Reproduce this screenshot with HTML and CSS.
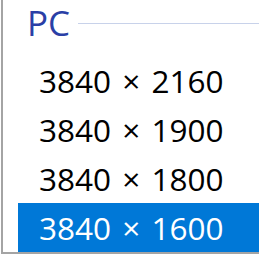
FILE: index.html
```html
<!DOCTYPE html>
<html lang="en">
<head>
    <meta charset="UTF-8">
    <title>PC</title>
    <link rel="stylesheet" href="styles.css">
</head>
<body>
<div class="panel">
    <div class="group-header">
        <span class="group-title">PC</span>
        <span class="group-line"></span>
    </div>
    <ul class="res-list">
        <li class="res-item">3840 × 2160</li>
        <li class="res-item">3840 × 1900</li>
        <li class="res-item">3840 × 1800</li>
        <li class="res-item selected">3840 × 1600</li>
    </ul>
</div>
</body>
</html>
```
FILE: styles.css
```css
body {
    font-family: "Open Sans", "Noto Sans", sans-serif;
    margin: 0;
    padding: 0;
    background-color: #fff;
}
.panel {
    margin-left: 1px;
    border-left: 2px solid #a4a4a4;
    border-bottom: 2px solid #a4a4a4;
}
.group-header {
    display: flex;
    align-items: flex-start;
    height: 56px;
    padding-left: 24px;
}
.group-title {
    font-size: 35px;
    line-height: 46px;
    color: #2a3fa6;
}
.group-line {
    flex: 1;
    height: 1px;
    margin-top: 23px;
    margin-left: 8px;
    background-color: #c8d2ea;
}
.res-list {
    list-style: none;
    margin: 0 0 0 15px;
    padding: 0;
}
.res-item {
    height: 49px;
    line-height: 49px;
    padding-left: 21px;
    font-size: 31.5px;
    word-spacing: 3px;
    color: #000;
}
.res-item.selected {
    background-color: #0078d7;
    color: #fff;
}
```
